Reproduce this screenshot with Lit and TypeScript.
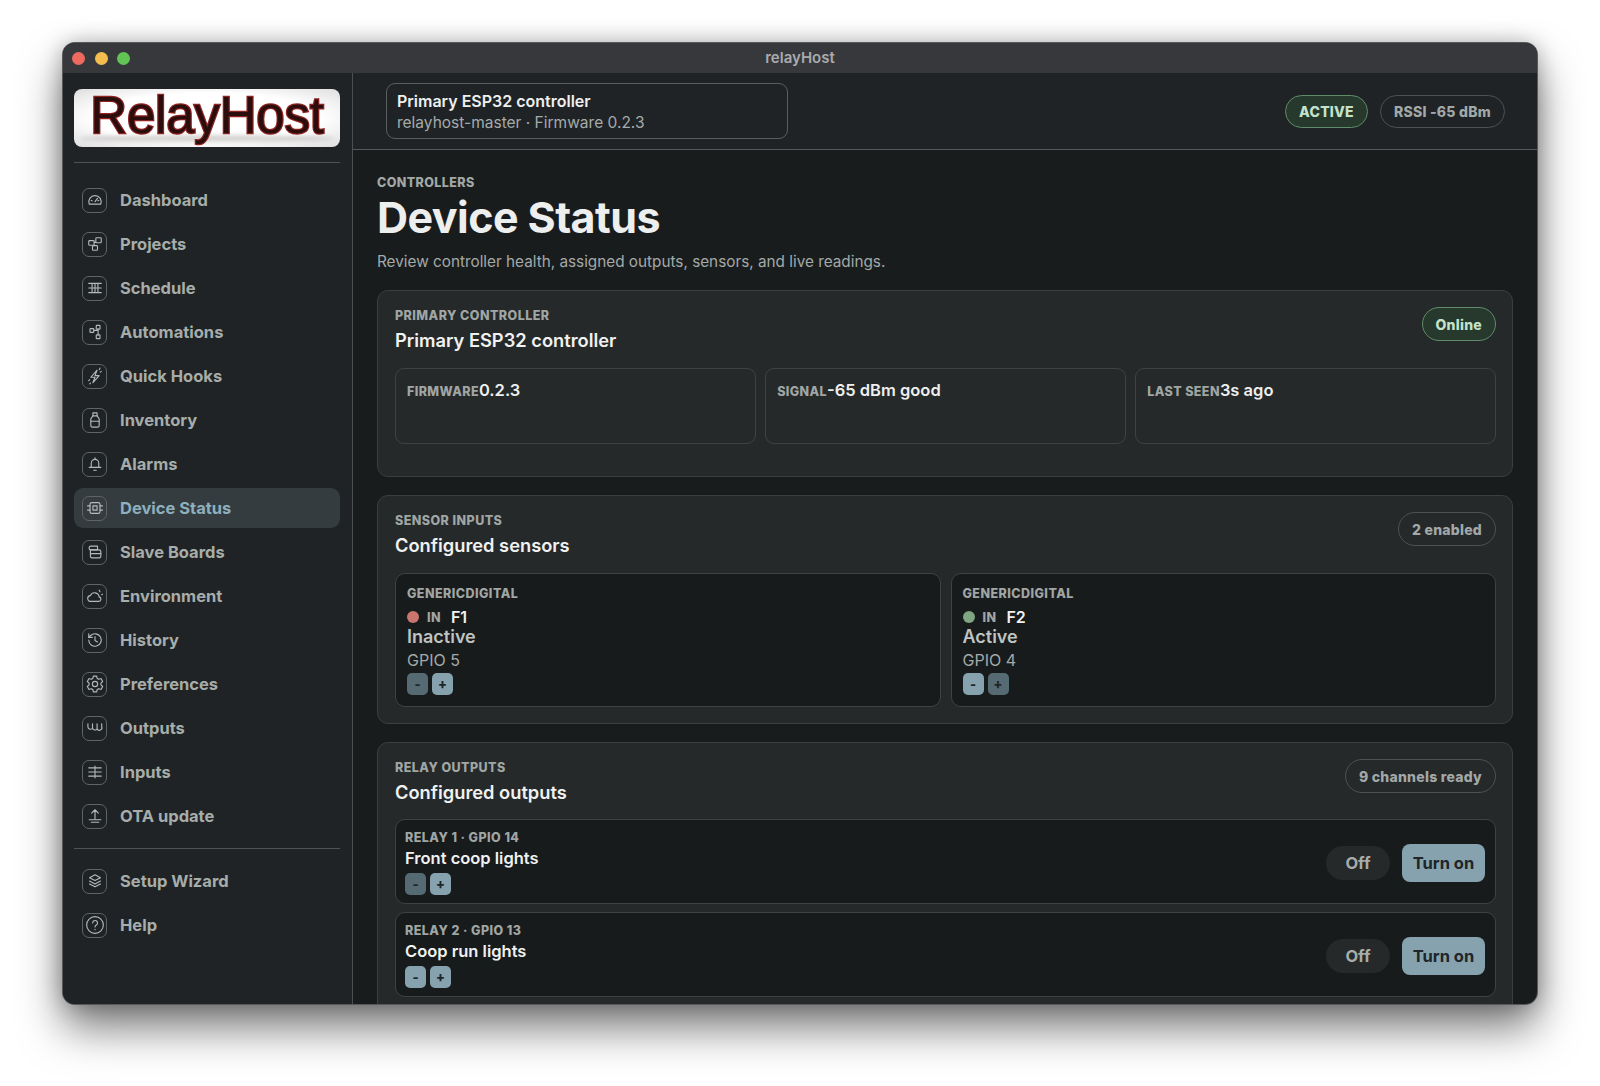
import { LitElement, html, css, svg } from "lit";
import { customElement } from "lit/decorators.js";

const I: Record<string, unknown> = {
  dashboard: svg`<path d="M5 17a7.500 7.500 0 1 1 14 0z"/><path d="M12 14l3-4"/><path d="M7.500 12.500l1 .5M16.500 12.500l-1 .5"/>`,
  projects: svg`<rect x="4.500" y="8" width="6.500" height="5.500" rx="1"/><rect x="13" y="4.500" width="6.500" height="6" rx="1"/><rect x="9" y="14" width="6" height="5.500" rx="1"/><path d="M11 10h2"/>`,
  schedule: svg`<path d="M4.500 6.500h15M4.500 12h15M4.500 17.500h15M8.500 6.500v11M12 6.500v11M15.500 6.500v11"/>`,
  automations: svg`<rect x="6" y="8" width="4.500" height="4.500" rx=".8"/><rect x="13.500" y="4" width="4.500" height="4.500" rx=".8"/><rect x="13.500" y="15.500" width="4.500" height="4.500" rx=".8"/><path d="M10.500 10h5.250M15.750 8.500v7"/>`,
  hooks: svg`<path d="M14.500 5L7 13.500h5L9.500 20l7.500-8.500h-5l2.500-6.500z"/><path d="M18 2.500l-.7 1.800M19.500 6.500l-1 .8M5.500 16.500l-1 1M6.500 20.500l-.8 1"/>`,
  inventory: svg`<path d="M9.500 3.500h5v3.500h-5z"/><path d="M9.500 7L7 10.500v8.500a1.500 1.500 0 0 0 1.500 1.500h7a1.500 1.500 0 0 0 1.500-1.500v-8.500L14.500 7"/><path d="M7 13.500h10"/>`,
  alarms: svg`<path d="M7.500 15.500v-4.500a4.500 4.500 0 0 1 9 0v4.500"/><path d="M5 16h14"/><path d="M10.500 19.500h3"/><path d="M12 4.500v2"/>`,
  chip: svg`<rect x="6" y="5.500" width="12" height="13" rx="2"/><rect x="9.500" y="9.500" width="5" height="5"/><path d="M3 9.500h3M3 14.500h3M18 9.500h3M18 14.500h3"/>`,
  boards: svg`<path d="M5 7a2 2 0 0 1 2-2h8v4.500H7A2 2 0 0 1 5 7z"/><path d="M7 9.500h10a2 2 0 0 1 2 2V17a2 2 0 0 1-2 2H8.500a2 2 0 0 1-2-2V9.500"/><path d="M6.500 14h12.500"/>`,
  env: svg`<path d="M7 18.500a3.500 3.500 0 0 1-.5-7 5.500 5.500 0 0 1 10.500 1.500 2.800 2.800 0 0 1-.5 5.500z"/><path d="M17 5l1 1.800M20 10.500l1-.5"/>`,
  history: svg`<path d="M4.500 12a7.500 7.500 0 1 0 2.300-5.400L4.500 8.800"/><path d="M4.500 4.500v4.300h4.300"/><path d="M12 8v4.500l3 1.800"/>`,
  gear: svg`<circle cx="12" cy="12" r="3.200"/><path d="M10 2.500h4l.6 2.800 1.900 1.100 2.700-.9 2 3.500-2.100 1.900v2.200l2.100 1.900-2 3.500-2.700-.9-1.900 1.100-.6 2.800h-4l-.6-2.800-1.900-1.100-2.700.9-2-3.500 2.100-1.900v-2.200L2.800 9l2-3.500 2.700.9 1.900-1.100z"/>`,
  outputs: svg`<path d="M3.500 7v3.500a3 3 0 0 0 5 2.200M9 7v5a3 3 0 0 0 5.500 1M14.500 7v6a3 3 0 0 0 5.500-2.500V7"/>`,
  inputs: svg`<path d="M4.500 7h15M4.500 12h15M4.500 17h15M12 5v14"/>`,
  ota: svg`<path d="M12 15.500V4.500M8 8.500l4-4 4 4"/><path d="M5 16.500h14M7.500 19.500h9"/>`,
  layers: svg`<path d="M12 4.500l6.500 3.500L12 11.500 5.500 8z"/><path d="M5.500 12L12 15.500 18.500 12"/><path d="M5.500 15.500L12 19 18.500 15.500"/>`,
  help: svg`<circle cx="12" cy="12" r="10"/><path d="M9.200 9.500a2.900 2.900 0 1 1 4.400 2.500c-1 .6-1.600 1.200-1.600 2.400"/><path d="M12 17.300v.4"/>`,
};

const NAV: [string, string][] = [
  ["Dashboard", "dashboard"], ["Projects", "projects"], ["Schedule", "schedule"], ["Automations", "automations"],
  ["Quick Hooks", "hooks"], ["Inventory", "inventory"], ["Alarms", "alarms"], ["Device Status", "chip"],
  ["Slave Boards", "boards"], ["Environment", "env"], ["History", "history"], ["Preferences", "gear"],
  ["Outputs", "outputs"], ["Inputs", "inputs"], ["OTA update", "ota"],
];
const FOOT: [string, string][] = [["Setup Wizard", "layers"], ["Help", "help"]];

@customElement("app-root")
export class AppRoot extends LitElement {
  static styles = css`
    :host { display: block; height: 1086px; background: #fff; font-family: Inter, "Liberation Sans", sans-serif; padding: 43px 63px 82px 63px; box-sizing: border-box; overflow: hidden; -webkit-font-smoothing: antialiased; }
    * { box-sizing: border-box; }
    .window { height: 961px; display: flex; flex-direction: column; border-radius: 12px; overflow: hidden; background: #191c1d; box-shadow: 0 0 0 1px #56585b, 0 24px 44px rgba(0,0,0,.52), 0 0 22px rgba(0,0,0,.28); }
    .titlebar { flex: 0 0 30px; background: #37383c; position: relative; display: flex; align-items: center; justify-content: center; color: #a9abad; font-size: 15px; font-weight: 600; padding-bottom: 2px; }
    .lights { position: absolute; left: 9px; top: 9px; display: flex; gap: 9.500px; }
    .lights i { width: 13px; height: 13px; border-radius: 50%; }
    .body { flex: 1; display: flex; min-height: 0; }
    .side { flex: 0 0 290px; background: #1f2325; border-right: 1px solid #4b4f51; padding: 16px 12px 0 11px; }
    .logo { height: 58px; border-radius: 8px; padding-bottom: 4px; background: radial-gradient(ellipse at center, #fff 60%, #dedede 100%); display: flex; align-items: center; justify-content: center; position: relative; }
    .logo span { position: relative; z-index: 1; font-family: "Liberation Sans", Arial, sans-serif; font-size: 51px; font-weight: 400; letter-spacing: -.2px; line-height: 54px; color: #2b0d0d; -webkit-text-stroke: 2.400px #8e2320; paint-order: stroke fill; }
    .logo::after { content: ""; position: absolute; left: 6px; right: 6px; bottom: 5px; height: 7px; border-radius: 50%; background: rgba(120,110,105,.3); filter: blur(2px); }
    .rule { height: 1px; background: #4f5355; }
    .rule.upper { margin-top: 15px; margin-bottom: 17px; }
    .rule.mid { margin-top: 12px; margin-bottom: 12px; }
    .nav { display: flex; flex-direction: column; gap: 4px; }
    .item { height: 40px; border-radius: 9px; padding-left: 8px; display: flex; align-items: center; gap: 13px; color: #a6adaa; font-size: 16.500px; font-weight: 700; }
    .item.on { background: #343c40; color: #8fafbd; }
    .ico { width: 25px; height: 25px; border: 1px solid #5f6465; border-radius: 7px; display: flex; align-items: center; justify-content: center; flex: none; }
    .ico svg { width: 20px; height: 20px; fill: none; stroke: #b4bab8; stroke-width: 1.350; stroke-linecap: round; stroke-linejoin: round; }
    .main { flex: 1; min-width: 0; display: flex; flex-direction: column; }
    .top { flex: 0 0 77px; background: #1f2325; border-bottom: 1px solid #54585a; padding: 10px 32px 0 33px; display: flex; justify-content: space-between; }
    .picker { width: 402px; height: 56px; border: 1px solid #5a5e60; border-radius: 9px; padding: 7px 10px; }
    .picker b { display: block; font-size: 16px; line-height: 21px; font-weight: 600; color: #eef0ef; }
    .picker span { display: block; font-size: 15.500px; line-height: 21px; color: #a5abaa; }
    .pills { display: flex; gap: 12px; padding-top: 12px; align-items: flex-start; }
    .pill { height: 33px; border-radius: 17px; border: 1px solid #4d5153; padding: 0 13px; display: flex; align-items: center; font-size: 14px; font-weight: 800; color: #a2a8a7; white-space: nowrap; letter-spacing: .25px; }
    .pill.ok { background: #26392c; border-color: #5f8c69; color: #c4e2cb; }
    .scroll { flex: 1; min-height: 0; overflow: hidden; padding: 25px 24px 0; }
    .kick { font-size: 12.500px; line-height: 16px; font-weight: 800; letter-spacing: .4px; color: #a2a8a6; }
    h1 { margin: 0; font-size: 43px; line-height: 52px; font-weight: 700; color: #edeeee; letter-spacing: -.55px; }
    .sub { margin-top: 8px; font-size: 15.300px; line-height: 22px; color: #a3a9a8; }
    .card { margin-top: 18px; background: #25292a; border: 1px solid #393e3f; border-radius: 11px; padding: 17px 16px 16px 17px; }
    .card.first { height: 187px; margin-top: 17px; }
    .head { display: flex; justify-content: space-between; align-items: flex-start; height: 60px; }
    .card.relays .head { height: 59px; }
    .eyebrow { font-size: 12.500px; line-height: 16px; font-weight: 800; letter-spacing: .45px; color: #a0a6a4; }
    h2 { margin: 4px 0 0; font-size: 18.300px; line-height: 24px; font-weight: 600; color: #f0f1f0; }
    .head .pill { height: 34px; margin-top: -1px; }
    .metrics { display: grid; grid-template-columns: repeat(3, 1fr); gap: 9.500px; }
    .metric { height: 76px; border: 1px solid #3d4243; border-radius: 9px; padding: 10px 11px; display: flex; align-items: baseline; }
    .metric small { font-size: 12.500px; font-weight: 800; letter-spacing: .4px; color: #a0a6a4; }
    .metric b { font-size: 16.500px; line-height: 22px; font-weight: 600; color: #eeefee; }
    .sensors { display: grid; grid-template-columns: 1fr 1fr; gap: 10px; }
    .tile { height: 134px; background: #181b1c; border: 1px solid #3d4243; border-radius: 10px; padding: 11px 11px; }
    .tile .eyebrow { line-height: 17px; }
    .state { display: flex; align-items: center; height: 20px; margin-top: 5px; }
    .dot { width: 12px; height: 12px; border-radius: 50%; margin-right: 8px; }
    .state em { font-style: normal; font-size: 12.500px; font-weight: 800; color: #a0a6a4; margin-right: 10px; letter-spacing: .4px; }
    .state b { font-size: 16px; font-weight: 600; color: #f0f1f0; }
    .val { font-size: 18px; line-height: 20px; font-weight: 600; color: #bfc4c2; }
    .gpio { font-size: 16px; line-height: 22px; color: #a3a9a8; margin-top: 2px; }
    .btns { display: flex; gap: 4px; margin-top: 2px; }
    .btns i { width: 21px; height: 21.500px; border-radius: 5px; background: #86a2ae; color: #1f2528; font-style: normal; font-size: 13px; font-weight: 800; display: flex; align-items: center; justify-content: center; }
    .btns i.dim { background: #566a73; }
    .rows { display: flex; flex-direction: column; gap: 8px; }
    .row { height: 85px; background: #181b1c; border: 1px solid #3d4243; border-radius: 10px; padding: 10px 10px 8px 9px; display: flex; justify-content: space-between; }
    .row .name { font-size: 16.500px; line-height: 21px; font-weight: 600; color: #f0f1f0; margin-top: 2px; }
    .row .btns { margin-top: 4px; }
    .ctl { display: flex; align-items: center; gap: 12px; }
    .off { width: 64px; height: 34px; border-radius: 17px; background: #25292a; color: #a6adaa; font-size: 16.500px; font-weight: 700; display: flex; align-items: center; justify-content: center; }
    .go { width: 83px; height: 38px; border-radius: 8px; background: #86a2ae; color: #1f2528; font-size: 16.500px; font-weight: 700; display: flex; align-items: center; justify-content: center; }
  `;

  private navItem([label, icon]: [string, string]) {
    return html`<div class="item ${label === "Device Status" ? "on" : ""}">
      <span class="ico"><svg viewBox="0 0 24 24">${I[icon]}</svg></span>${label}
    </div>`;
  }

  private sensor(pin: string, state: string, gpio: string, color: string, on: boolean) {
    return html`<div class="tile">
      <div class="eyebrow">GENERICDIGITAL</div>
      <div class="state"><span class="dot" style="background:${color}"></span><em>IN</em><b>${pin}</b></div>
      <div class="val">${state}</div>
      <div class="gpio">${gpio}</div>
      <div class="btns"><i class=${on ? "" : "dim"}>-</i><i class=${on ? "dim" : ""}>+</i></div>
    </div>`;
  }

  private relay(label: string, name: string, dim: boolean) {
    return html`<div class="row">
      <div>
        <div class="eyebrow">${label}</div>
        <div class="name">${name}</div>
        <div class="btns"><i class=${dim ? "dim" : ""}>-</i><i>+</i></div>
      </div>
      <div class="ctl"><span class="off">Off</span><span class="go">Turn on</span></div>
    </div>`;
  }

  render() {
    return html`<div class="window">
      <div class="titlebar">
        <div class="lights"><i style="background:#ee6a5e"></i><i style="background:#f5bd4f"></i><i style="background:#61c454"></i></div>
        relayHost
      </div>
      <div class="body">
        <aside class="side">
          <div class="logo"><span>RelayHost</span></div>
          <div class="rule upper"></div>
          <nav class="nav">${NAV.map((n) => this.navItem(n))}</nav>
          <div class="rule mid"></div>
          <nav class="nav">${FOOT.map((n) => this.navItem(n))}</nav>
        </aside>
        <section class="main">
          <header class="top">
            <div class="picker"><b>Primary ESP32 controller</b><span>relayhost-master · Firmware 0.2.3</span></div>
            <div class="pills"><span class="pill ok">ACTIVE</span><span class="pill">RSSI -65 dBm</span></div>
          </header>
          <div class="scroll">
            <div class="kick">CONTROLLERS</div>
            <h1>Device Status</h1>
            <div class="sub">Review controller health, assigned outputs, sensors, and live readings.</div>
            <div class="card first">
              <div class="head"><div><div class="eyebrow">PRIMARY CONTROLLER</div><h2>Primary ESP32 controller</h2></div><span class="pill ok">Online</span></div>
              <div class="metrics">
                <div class="metric"><small>FIRMWARE</small><b>0.2.3</b></div>
                <div class="metric"><small>SIGNAL</small><b>-65 dBm good</b></div>
                <div class="metric"><small>LAST SEEN</small><b>3s ago</b></div>
              </div>
            </div>
            <div class="card">
              <div class="head"><div><div class="eyebrow">SENSOR INPUTS</div><h2>Configured sensors</h2></div><span class="pill">2 enabled</span></div>
              <div class="sensors">
                ${this.sensor("F1", "Inactive", "GPIO 5", "#c9766f", false)}
                ${this.sensor("F2", "Active", "GPIO 4", "#7ea682", true)}
              </div>
            </div>
            <div class="card relays">
              <div class="head"><div><div class="eyebrow">RELAY OUTPUTS</div><h2>Configured outputs</h2></div><span class="pill">9 channels ready</span></div>
              <div class="rows">
                ${this.relay("RELAY 1 · GPIO 14", "Front coop lights", true)}
                ${this.relay("RELAY 2 · GPIO 13", "Coop run lights", false)}
              </div>
            </div>
          </div>
        </section>
      </div>
    </div>`;
  }
}
